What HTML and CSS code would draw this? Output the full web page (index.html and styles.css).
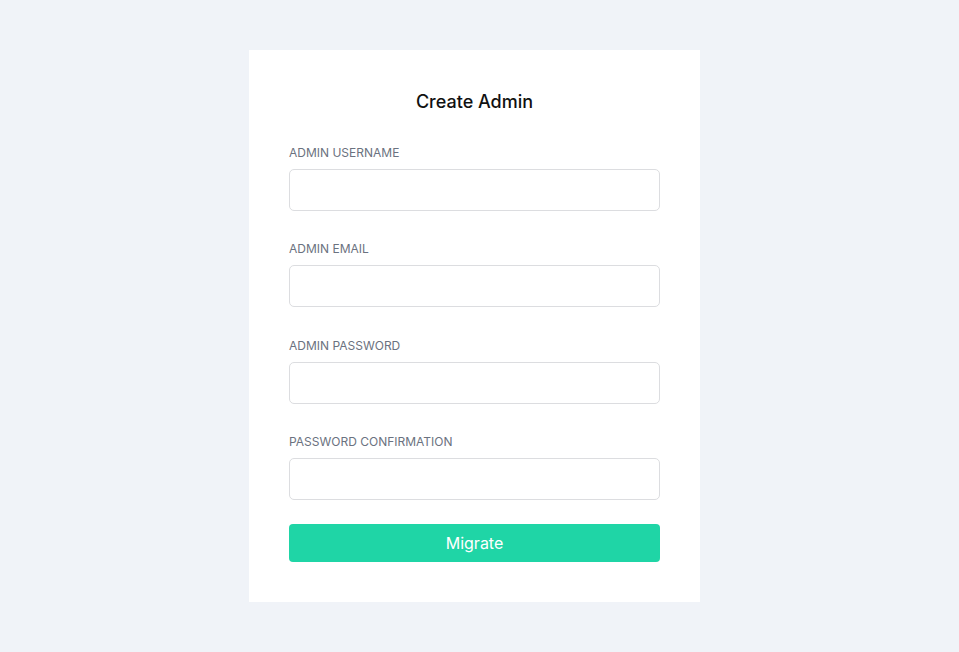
FILE: index.html
```html
<!DOCTYPE html>
<html lang="en">
<head>
    <meta charset="UTF-8">
    <title>Create Admin</title>
    <link rel="stylesheet" href="styles.css">
</head>
<body>

    <div class="card">
        <h1>Create Admin</h1>

        <form class="form">
            <div class="field">
                <label for="username">Admin Username</label>
                <input type="text" id="username">
            </div>
            <div class="field">
                <label for="email">Admin Email</label>
                <input type="email" id="email">
            </div>
            <div class="field">
                <label for="password">Admin Password</label>
                <input type="password" id="password">
            </div>
            <div class="field">
                <label for="confirm">Password Confirmation</label>
                <input type="password" id="confirm">
            </div>
            <button type="button" class="btn">Migrate</button>
        </form>
    </div>

</body>
</html>
```

FILE: styles.css
```css
body {
    margin: 0;
    background-color: #f0f3f8;
    font-family: 'Inter', 'Liberation Sans', sans-serif;
    display: flex;
    flex-direction: column;
    align-items: center;
    padding-top: 50px;
}

.card {
    background-color: #fff;
    width: 371px;
    padding: 40px;
    margin-left: -10px;
}

h1 {
    margin: 1px 0 32px;
    font-size: 18px;
    line-height: 22px;
    font-weight: 500;
    color: #111;
    text-align: center;
}

.form {
    display: flex;
    flex-direction: column;
}

.field {
    display: flex;
    flex-direction: column;
    margin-bottom: 30.3px;
}

    .field label {
        font-size: 12px;
        line-height: 16px;
        color: #6b7280;
        text-transform: uppercase;
        margin-bottom: 8px;
    }

    .field input {
        height: 42px;
        box-sizing: border-box;
        border: 1px solid #dcdde0;
        border-radius: 5px;
        padding: 0 12px;
        font-size: 14px;
        font-family: inherit;
        outline: none;
    }

.field:last-of-type {
    margin-bottom: 24px;
}

.btn {
    height: 38px;
    border: none;
    border-radius: 4px;
    background-color: #1fd5a6;
    color: #fff;
    font-size: 16px;
    font-family: inherit;
    cursor: pointer;
}
```
